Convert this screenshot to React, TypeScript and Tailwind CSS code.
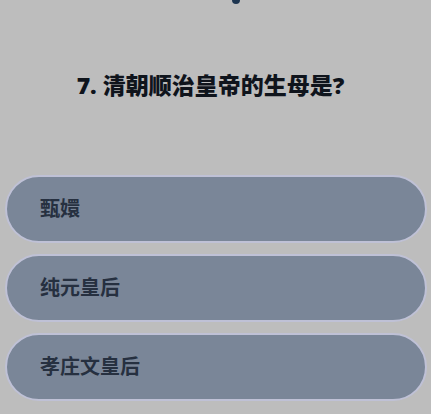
const options = ['甄嬛', '纯元皇后', '孝庄文皇后'];

export default function App() {
  return (
    <div
      className="min-h-[414px] w-full overflow-hidden bg-[#bdbdbd]"
      style={{ fontFamily: '"Noto Sans", "Noto Sans CJK SC", sans-serif' }}
    >
      {/* bit of the element above, cut off at the top */}
      <div className="ml-[232px] -mt-[4px] h-[8px] w-[8px] rounded-full bg-[#1d3550]" />

      <h2 className="mt-[66px] pr-[10px] text-center text-[23px] font-black leading-[30px] text-[#0f141c]">
        7. 清朝顺治皇帝的生母是?
      </h2>

      <div className="mt-[75px] flex flex-col gap-[11px] pl-[5px] pr-[4px]">
        {options.map((opt) => (
          <button
            key={opt}
            className="flex h-[68px] w-full items-center rounded-full border-2 border-[#bfc1d6] bg-[#7a8698] pl-[33px] text-left text-[20px] font-bold text-[#263040]"
          >
            {opt}
          </button>
        ))}
      </div>
    </div>
  );
}
